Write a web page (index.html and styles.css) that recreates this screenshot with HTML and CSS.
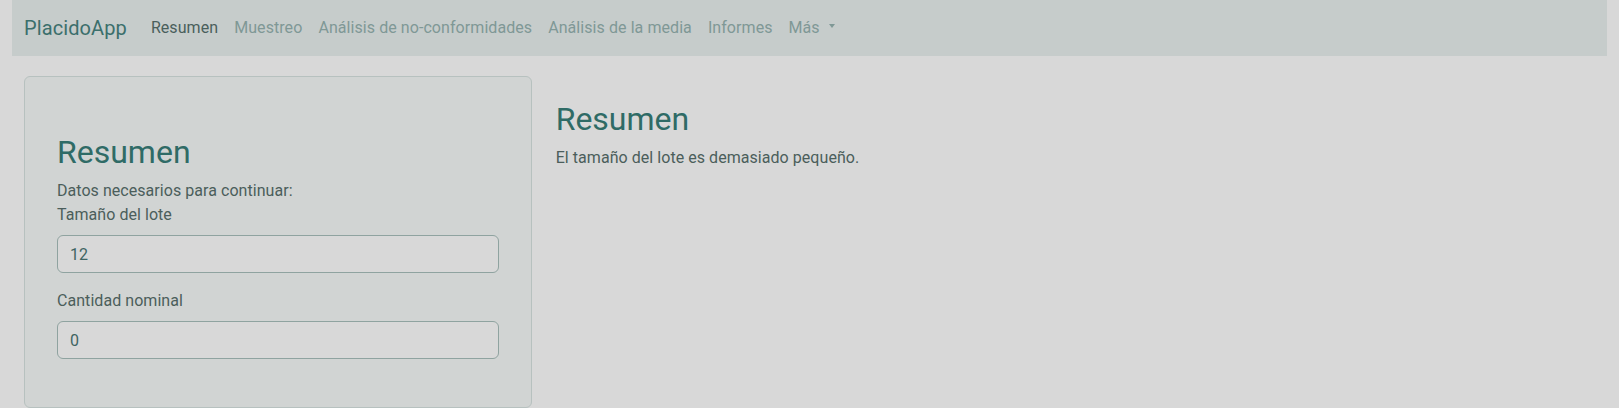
FILE: index.html
```html
<!DOCTYPE html>
<html lang="es">
<head>
<meta charset="utf-8">
<title>PlacidoApp</title>
<link rel="stylesheet" href="styles.css">
</head>
<body>
<div class="page">
  <nav class="navbar">
    <a class="brand" href="#">PlacidoApp</a>
    <ul class="nav">
      <li><a class="nav-link active" href="#">Resumen</a></li>
      <li><a class="nav-link" href="#">Muestreo</a></li>
      <li><a class="nav-link" href="#">Análisis de no-conformidades</a></li>
      <li><a class="nav-link" href="#">Análisis de la media</a></li>
      <li><a class="nav-link" href="#">Informes</a></li>
      <li><a class="nav-link dropdown" href="#">Más</a></li>
    </ul>
  </nav>
  <main class="row">
    <div class="col-side">
      <div class="card">
        <h2 class="title">Resumen</h2>
        <p class="text">Datos necesarios para continuar:</p>
        <div class="field">
          <label class="label" for="lote">Tamaño del lote</label>
          <input class="input" id="lote" type="text" value="12">
        </div>
        <div class="field">
          <label class="label" for="nominal">Cantidad nominal</label>
          <input class="input" id="nominal" type="text" value="0">
        </div>
      </div>
    </div>
    <div class="col-main">
      <h2 class="title">Resumen</h2>
      <p class="text">El tamaño del lote es demasiado pequeño.</p>
    </div>
  </main>
</div>
</body>
</html>
```
FILE: styles.css
```css
body {
  margin: 0;
  background: #d8d8d8;
  font-family: "Roboto", "Noto Sans", sans-serif;
  font-size: 16px;
  line-height: 1.5;
  color: #4b5e5b;
  letter-spacing: 0.05px;
}
.page {
  padding: 0 12px;
}
.navbar {
  display: flex;
  align-items: center;
  height: 56px;
  box-sizing: border-box;
  padding: 8px 12px;
  background: #c6cccb;
}
.brand {
  font-size: 20px;
  line-height: 30px;
  padding: 5px 0;
  margin-right: 16px;
  color: #3b6f6c;
  text-decoration: none;
  letter-spacing: 0.1px;
}
.nav {
  display: flex;
  list-style: none;
  margin: 0;
  padding: 0;
}
.nav-link {
  display: block;
  padding: 8px;
  line-height: 24px;
  color: #7f9896;
  text-decoration: none;
  letter-spacing: 0.07px;
}
.nav-link.active {
  color: #4a5f5c;
}
.dropdown::after {
  content: "";
  display: inline-block;
  margin-left: 9px;
  vertical-align: 5px;
  border-top: 4px solid;
  border-right: 3px solid transparent;
  border-left: 3px solid transparent;
}
.row {
  display: grid;
  grid-template-columns: 1fr 2fr;
  margin-top: 20px;
}
.col-side,
.col-main {
  padding: 0 12px;
}
.col-main {
  padding-top: 24px;
}
.card {
  border: 1px solid #b7c1bf;
  border-radius: 6px;
  background: #d1d4d3;
  padding: 56px 32px 32px;
}
.title {
  margin: 0 0 8px;
  font-size: 32px;
  line-height: 1.2;
  font-weight: 400;
  color: #2f6b66;
  letter-spacing: 0;
}
.text {
  margin: 0;
}
.field {
  margin-bottom: 16px;
}
.label {
  display: block;
  margin-bottom: 8px;
}
.input {
  display: block;
  width: 100%;
  height: 38px;
  box-sizing: border-box;
  padding: 6px 12px;
  border: 1px solid #8fa3a0;
  border-radius: 6px;
  background: #d8d8d8;
  color: #3f6462;
  font: inherit;
  outline: none;
}
```
